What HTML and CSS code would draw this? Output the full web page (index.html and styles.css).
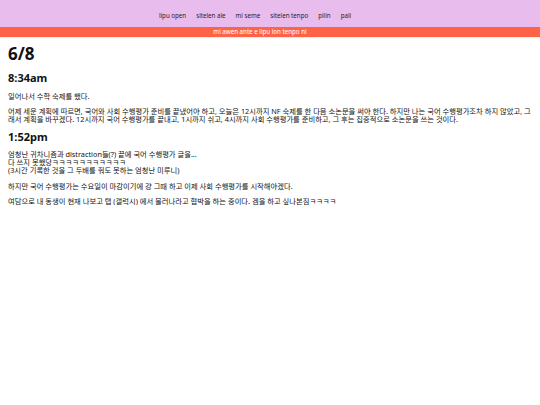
FILE: index.html
```html
<!DOCTYPE html>
<html lang="ko">
<head>
<meta charset="utf-8">
<title>6/8</title>
<link rel="stylesheet" href="styles.css">
</head>
<body>
<header class="top">
  <nav class="nav">
    <a class="nav-link" href="#">lipu open</a>
    <a class="nav-link" href="#">sitelen ale</a>
    <a class="nav-link" href="#">mi seme</a>
    <a class="nav-link" href="#">sitelen tenpo</a>
    <a class="nav-link" href="#">pilin</a>
    <a class="nav-link" href="#">pali</a>
  </nav>
  <div class="banner">mi awen ante e lipu lon tenpo ni</div>
</header>
<main class="content">
  <h1 class="title">6/8</h1>
  <h2 class="time">8:34am</h2>
  <p class="para">일어나서 수학 숙제를 했다.</p>
  <p class="para">어제 세운 계획에 따르면, 국어와 사회 수행평가 준비를 끝냈어야 하고, 오늘은 12시까지 NF 숙제를 한 다음 소논문을 써야 한다. 하지만 나는 국어 수행평가조차 하지 않았고, 그래서 계획을 바꾸겠다. 12시까지 국어 수행평가를 끝내고, 1시까지 쉬고, 4시까지 사회 수행평가를 준비하고, 그 후는 집중적으로 소논문을 쓰는 것이다.</p>
  <h2 class="time">1:52pm</h2>
  <p class="para">엄청난 귀차니즘과 distraction들(?) 끝에 국어 수행평가 글을...<br>다 쓰지 못했당ㅋㅋㅋㅋㅋㅋㅋㅋㅋㅋㅋ<br>(3시간 기록한 것을 그 두배를 줘도 못하는 엄청난 미루니)</p>
  <p class="para">하지만 국어 수행평가는 수요일이 마감이기에 걍 그때 하고 이제 사회 수행평가를 시작해야겠다.</p>
  <p class="para">여담으로 내 동생이 현재 나보고 탭 (갤럭시) 에서 물러나라고 협박을 하는 중이다. 겜을 하고 싶나본짐ㅋㅋㅋㅋ</p>
</main>
</body>
</html>
```
FILE: styles.css
```css
html, body {
  margin: 0;
  padding: 0;
  background: #ffffff;
  color: #111111;
  font-family: "Noto Sans", "Noto Sans CJK KR", sans-serif;
}

.top {
  display: flex;
  flex-direction: column;
}

.nav {
  height: 27px;
  background: #e8bcec;
  display: flex;
  justify-content: center;
  align-items: center;
  gap: 10px;
  padding: 3px 30px 0 0;
  box-sizing: border-box;
}

.nav-link {
  font-size: 6.2px;
  color: #2a1f2c;
  text-decoration: none;
}

.banner {
  height: 10px;
  background: #ff6347;
  color: #ffffff;
  font-size: 6.2px;
  line-height: 10px;
  text-align: center;
  padding-right: 20px;
  border-bottom: 1px solid #fdeae4;
}

.content {
  padding: 0 8px;
  display: flex;
  flex-direction: column;
}

.title {
  margin: 6px 0 0;
  font-size: 17px;
  line-height: 20px;
  font-weight: 700;
}

.time {
  margin: 7.3px 0 0;
  font-size: 11px;
  line-height: 13px;
  font-weight: 700;
}

.para {
  margin: 7.3px 0 0;
  font-size: 7.3px;
  line-height: 8px;
}
```
